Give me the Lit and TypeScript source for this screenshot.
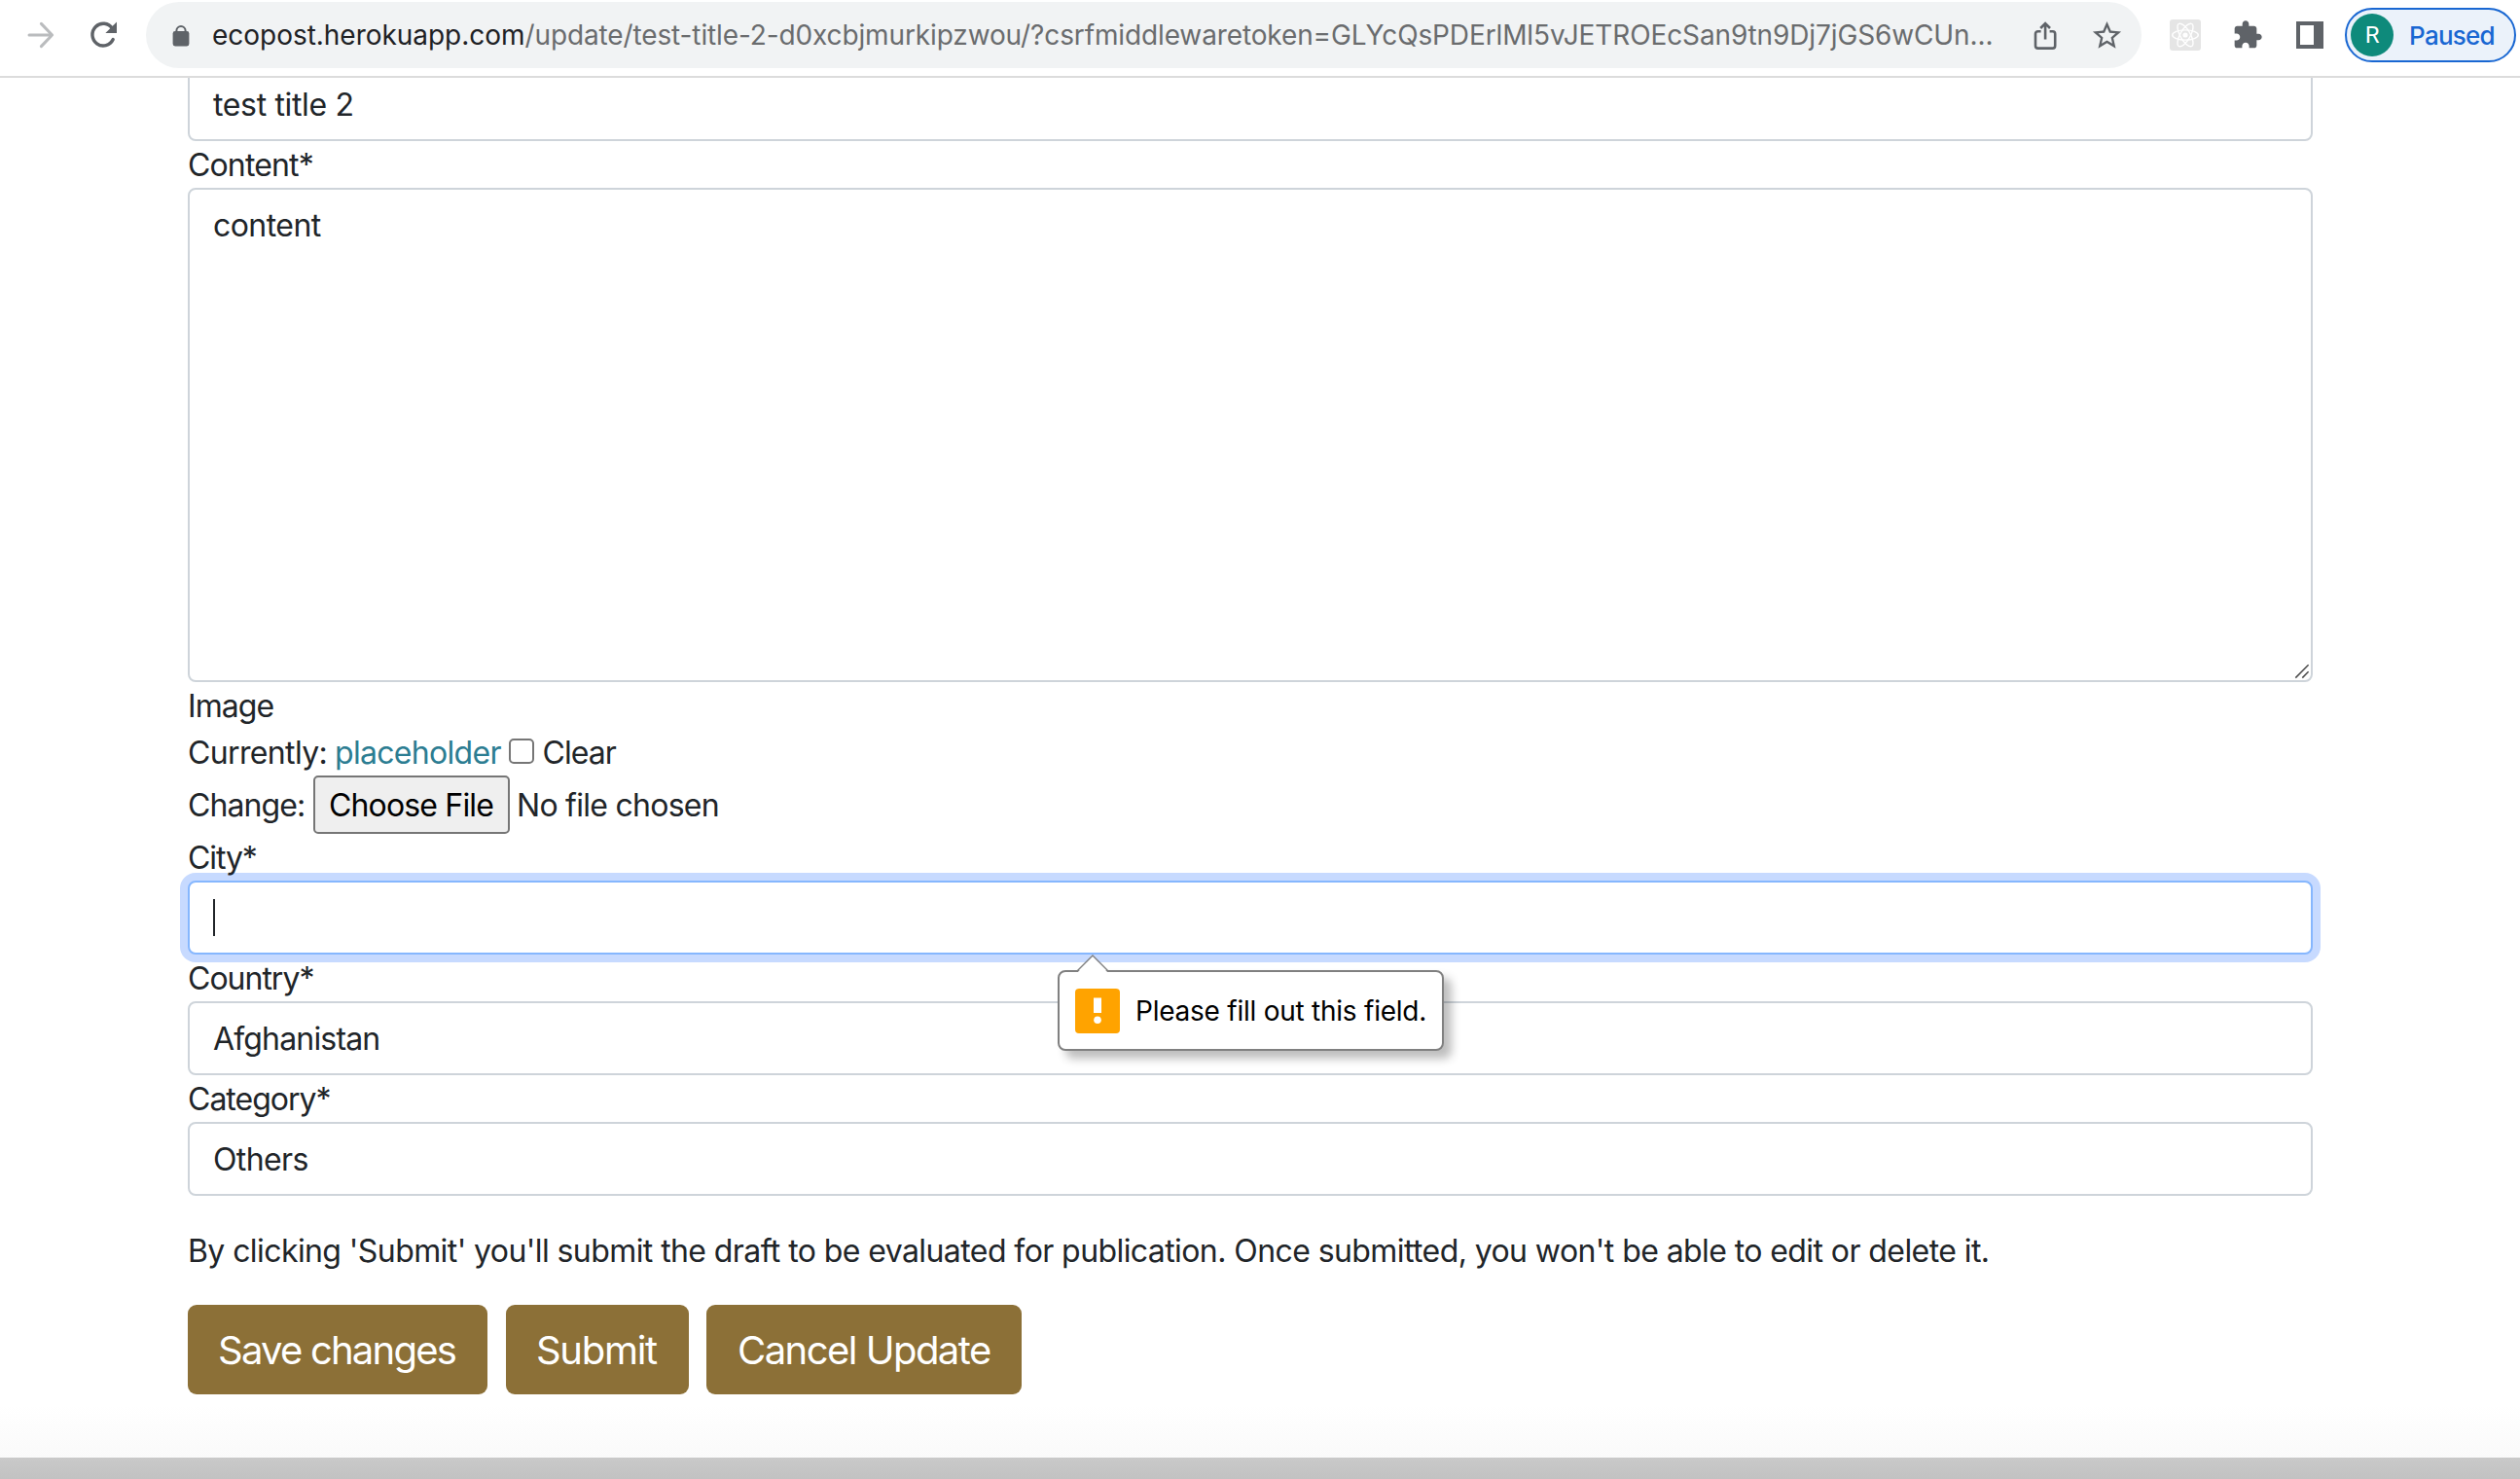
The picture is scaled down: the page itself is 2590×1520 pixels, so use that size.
import { LitElement, html, css, svg } from "lit";
import { customElement, property } from "lit/decorators.js";

const forwardIcon = html`<svg class="forward" width="28" height="28" viewBox="0 0 28 28" fill="none" stroke="#babcbe" stroke-width="3" stroke-linecap="round" stroke-linejoin="round"><path d="M2 14H25.4M14.4 2.4L25.6 14L14.4 25.6"/></svg>`;
const reloadIcon = html`<svg class="reload" width="30" height="30" viewBox="0 0 30 30"><path d="M24.2 19.6A11.2 11.4 0 1 1 23.4 8.2" fill="none" stroke="#5f6368" stroke-width="3.4" stroke-linecap="round"/><path d="M28 1.6V13H16.4z" fill="#5f6368"/></svg>`;
const lockIcon = html`<svg class="lock" width="18" height="22" viewBox="0 0 18 22"><path d="M4.4 9V5.6a4.6 4.6 0 0 1 9.2 0V9" fill="none" stroke="#5f6368" stroke-width="2"/><rect x=".6" y="6" width="16.8" height="15.4" rx="2.4" fill="#5f6368"/></svg>`;
const shareIcon = html`<svg class="share" width="24" height="30" viewBox="0 0 24 30" fill="none" stroke="#5f6368" stroke-width="2.6"><path d="M7.6 10.2H4.6a2.6 2.6 0 0 0-2.6 2.6V25a2.6 2.6 0 0 0 2.6 2.6h15A2.6 2.6 0 0 0 22.2 25V12.800a2.600 2.600 0 0 0-2.600-2.600H16.6"/><path d="M12.100 18.400V3M7.200 7L12.100 2.100L17 7" stroke-linejoin="miter" stroke-linecap="butt"/></svg>`;
const starIcon = html`<svg class="star" width="35" height="35" viewBox="0 0 24 24" fill="#5f6368"><path d="M22 9.240l-7.190-.62L12 2 9.190 8.630 2 9.240l5.460 4.730L5.820 21 12 17.270 18.180 21l-1.630-7.030L22 9.240zM12 15.400l-3.760 2.270 1-4.280-3.320-2.880 4.380-.38L12 6.100l1.710 4.040 4.380.38-3.320 2.880 1 4.280L12 15.400z"/></svg>`;
const atomIcon = html`<svg class="atom" width="32" height="32" viewBox="0 0 32 32"><rect width="32" height="32" rx="3" fill="#e5e5e5"/><g fill="none" stroke="#fff" stroke-width="1.4">${[0, 60, 120].map(
  (a) => svg`<ellipse cx="16" cy="16" rx="13.300" ry="5.100" transform="rotate(${a} 16 16)"/>`
)}</g><circle cx="16" cy="16" r="2.600" fill="#fff"/></svg>`;
const puzzleIcon = html`<svg class="puzzle" width="32" height="32" viewBox="0 0 24 24" fill="#5f6368"><path d="M20.500 11H19V7c0-1.100-.9-2-2-2h-4V3.500C13 2.120 11.880 1 10.500 1S8 2.120 8 3.500V5H4c-1.100 0-1.990.9-1.990 2v3.800H3.500c1.490 0 2.700 1.210 2.700 2.700s-1.210 2.700-2.700 2.700H2V20c0 1.100.9 2 2 2h3.800v-1.500c0-1.490 1.210-2.700 2.700-2.700 1.490 0 2.700 1.210 2.700 2.700V22H17c1.100 0 2-.9 2-2v-4h1.500c1.380 0 2.500-1.120 2.500-2.500S21.880 11 20.500 11z"/></svg>`;
const panelIcon = html`<svg class="panel" width="28" height="28" viewBox="0 0 28 28"><path fill="#5f6368" fill-rule="evenodd" d="M0 0H28V28H0zM4 4V24H18V4z"/></svg>`;

@customElement("browser-bar")
export class BrowserBar extends LitElement {
  static styles = css`
    :host { display: flex; box-sizing: border-box; height: 80px; padding: 2px 4px 0 0; border-bottom: 2px solid #dcdcdc; background: #fff; align-items: flex-start; font: 28px/68px Inter, "Liberation Sans", sans-serif; }
    svg { display: block; flex: none; }
    .forward { margin: 20px 0 0 28px; }
    .reload { margin: 19px 0 0 36px; }
    .omnibox { display: flex; box-sizing: border-box; width: 2052px; height: 68px; margin-left: 28px; border-radius: 34px; background: #f1f3f4; }
    .lock { margin: 24px 0 0 27px; }
    .url { width: 1872px; margin-left: 23px; white-space: nowrap; color: #6a6c6e; letter-spacing: -0.122px; }
    .domain { color: #202124; letter-spacing: -0.03px; }
    .share { margin: 20px 0 0 0; }
    .star { margin: 17px 0 0 34px; }
    .atom { margin: 18px 0 0 29px; }
    .puzzle { margin: 18px 0 0 32px; }
    .panel { margin: 20px 0 0 34px; }
    .profile { display: flex; box-sizing: border-box; align-items: center; width: 176px; height: 56px; margin: 6px 0 0 22px; padding-left: 4px; border: 2px solid #1967d2; border-radius: 28px; background: #ebf2fa; color: #1967d2; font-weight: 500; font-size: 26px; letter-spacing: -0.75px; }
    .avatar { width: 44px; height: 44px; margin-right: 16px; border-radius: 50%; background: #0e8a7b; color: #fff; text-align: center; font: 24px/45px Roboto, sans-serif; letter-spacing: 0; }
    .state { padding-top: 1px; }
  `;
  render() {
    return html`${forwardIcon}${reloadIcon}
      <div class="omnibox">${lockIcon}<div class="url"><span class="domain">ecopost.herokuapp.com</span>/update/test-title-2-d0xcbjmurkipzwou/?csrfmiddlewaretoken=GLYcQsPDErlMl5vJETROEcSan9tn9Dj7jGS6wCUn...</div>${shareIcon}${starIcon}</div>
      ${atomIcon}${puzzleIcon}${panelIcon}
      <div class="profile"><span class="avatar">R</span><span class="state">Paused</span></div>`;
  }
}

@customElement("validation-bubble")
export class ValidationBubble extends LitElement {
  static styles = css`
    :host { position: absolute; left: 894px; top: 140px; z-index: 2; display: block; }
    .bubble { box-sizing: border-box; display: flex; align-items: center; width: 397px; height: 83px; padding-left: 16px; border: 2px solid #808080; border-radius: 8px; background: #fff; box-shadow: 8px 8px 10px rgba(0, 0, 0, 0.26); color: #000; font: 28px/42px Inter, "Liberation Sans", sans-serif; letter-spacing: -0.24px; white-space: nowrap; }
    .arrow { position: absolute; left: 19px; top: -16px; display: block; }
    .warn { flex: none; margin-right: 16px; }
  `;
  render() {
    return html`<div class="bubble">
        <svg class="warn" width="46" height="46" viewBox="0 0 46 46"><rect width="46" height="46" rx="4" fill="#ffa300"/><rect x="19" y="9.500" width="8" height="15.500" fill="#fff"/><circle cx="23" cy="32.300" r="3.800" fill="#fff"/></svg>
        <span>Please fill out this field.</span>
      </div>
      <svg class="arrow" width="34" height="19" viewBox="0 0 34 19"><path d="M1 19L17 1.500L33 19z" fill="#fff"/><path d="M1 17L17 1L33 17" fill="none" stroke="#808080" stroke-width="1.400"/></svg>`;
  }
}

@customElement("form-field")
export class FormField extends LitElement {
  @property() label = "";
  @property() value = "";
  @property() kind = "text";
  @property({ type: Boolean }) focused = false;
  static styles = css`
    :host { display: block; position: relative; font: 32px/50px Inter, "Liberation Sans", sans-serif; color: #212529; }
    .label { display: block; position: relative; z-index: 1; height: 48px; }
    .content-label, .category-label { letter-spacing: -0.85px; }
    .category-label { letter-spacing: -1px; }
    .country-label { letter-spacing: -1px; }
    .city-label { letter-spacing: -1.1px; }
    .control { position: relative; box-sizing: border-box; height: 76px; padding: 12px 24px; border: 2px solid #ced4da; border-radius: 8px; background: #fff; }
    .area { height: 508px; }
    .focused { border-color: #86b7fe; box-shadow: 0 0 0 8px #c7daff; }
    .caret { display: block; width: 2px; height: 38px; margin-top: 5px; background: #212529; }
    .grip { position: absolute; right: 1px; bottom: 1px; display: block; }
    .test { letter-spacing: -0.35px; }
    .content { letter-spacing: -0.55px; }
    .afghanistan { letter-spacing: -0.83px; }
    .others { letter-spacing: -0.61px; }
  `;
  render() {
    const name = this.label.replace("*", "").toLowerCase();
    const word = this.value.split(" ")[0].toLowerCase();
    return html`${this.label ? html`<span class="label ${name}-label">${this.label}</span>` : ""}
      <div class="control ${this.kind === "area" ? "area" : ""} ${this.focused ? "focused" : ""}">
        ${this.focused ? html`<i class="caret"></i>` : html`<span class=${word}>${this.value}</span>`}
        ${this.kind === "area" ? html`<svg class="grip" width="16" height="16" viewBox="0 0 16 16" stroke="#4d4d4d" stroke-width="1.500"><path d="M1.300 14.600L14.600 1.300M8.300 14.600L14.600 8.300"/></svg>` : ""}
      </div>
      <slot></slot>`;
  }
}

@customElement("app-root")
export class AppRoot extends LitElement {
  static styles = css`
    :host { display: flex; flex-direction: column; box-sizing: border-box; width: 100%; height: 1520px; overflow: hidden; background: #fff; color: #212529; font: 32px/50px Inter, "Liberation Sans", sans-serif; }
    browser-bar { position: relative; z-index: 3; flex: none; }
    .form { display: flex; flex-direction: column; box-sizing: border-box; width: 2184px; height: 1364px; margin-left: 193px; flex: none; }
    .first { margin-top: -11px; }
    .row { display: flex; height: 48px; white-space: nowrap; }
    .image { letter-spacing: -0.93px; }
    .currently { width: 151px; letter-spacing: -0.64px; }
    .link { width: 179px; color: #2c7d92; letter-spacing: -0.69px; }
    .check { box-sizing: border-box; width: 26px; height: 26px; margin: 10px 8.500px 0 0; border: 2px solid #767676; border-radius: 5px; background: #fff; }
    .clear { letter-spacing: -0.95px; }
    .file { height: 60px; line-height: 62px; }
    .change { width: 129px; letter-spacing: -0.9px; }
    .choose { box-sizing: border-box; width: 202px; height: 60px; margin-right: 7px; padding: 6px 0 0 14px; border: 2px solid #767676; border-radius: 5px; background: #efefef; color: #000; line-height: 46px; letter-spacing: -0.84px; }
    .none { letter-spacing: -0.73px; }
    .note { height: 48px; margin: 32px 0; white-space: nowrap; letter-spacing: -0.583px; }
    .actions { display: flex; height: 92px; font-size: 40px; line-height: 62px; color: #fff; }
    .btn { box-sizing: border-box; height: 92px; padding: 16px 0 0 31px; border-radius: 9px; background: #8c7037; white-space: nowrap; }
    .save { width: 308px; margin-right: 19px; letter-spacing: -1.780px; }
    .submit { width: 188px; margin-right: 18px; letter-spacing: -1.300px; }
    .cancel { width: 324px; padding-left: 32px; letter-spacing: -1.530px; }
    .fade { flex: none; height: 54px; background: linear-gradient(#fff, #fafafa); }
    .edge { flex: none; height: 22px; background: linear-gradient(#c9c9c9, #c2c2c2); }
  `;
  render() {
    return html`<browser-bar></browser-bar>
      <div class="form">
        <form-field class="first" value="test title 2"></form-field>
        <form-field label="Content*" value="content" kind="area"></form-field>
        <div class="row image">Image</div>
        <div class="row"><span class="currently">Currently:</span><span class="link">placeholder</span><span class="check"></span><span class="clear">Clear</span></div>
        <div class="row file"><span class="change">Change:</span><span class="choose">Choose File</span><span class="none">No file chosen</span></div>
        <form-field label="City*" focused><validation-bubble></validation-bubble></form-field>
        <form-field label="Country*" value="Afghanistan"></form-field>
        <form-field label="Category*" value="Others"></form-field>
        <div class="note">By clicking 'Submit' you'll submit the draft to be evaluated for publication. Once submitted, you won't be able to edit or delete it.</div>
        <div class="actions"><span class="btn save">Save changes</span><span class="btn submit">Submit</span><span class="btn cancel">Cancel Update</span></div>
      </div>
      <div class="fade"></div>
      <div class="edge"></div>`;
  }
}
